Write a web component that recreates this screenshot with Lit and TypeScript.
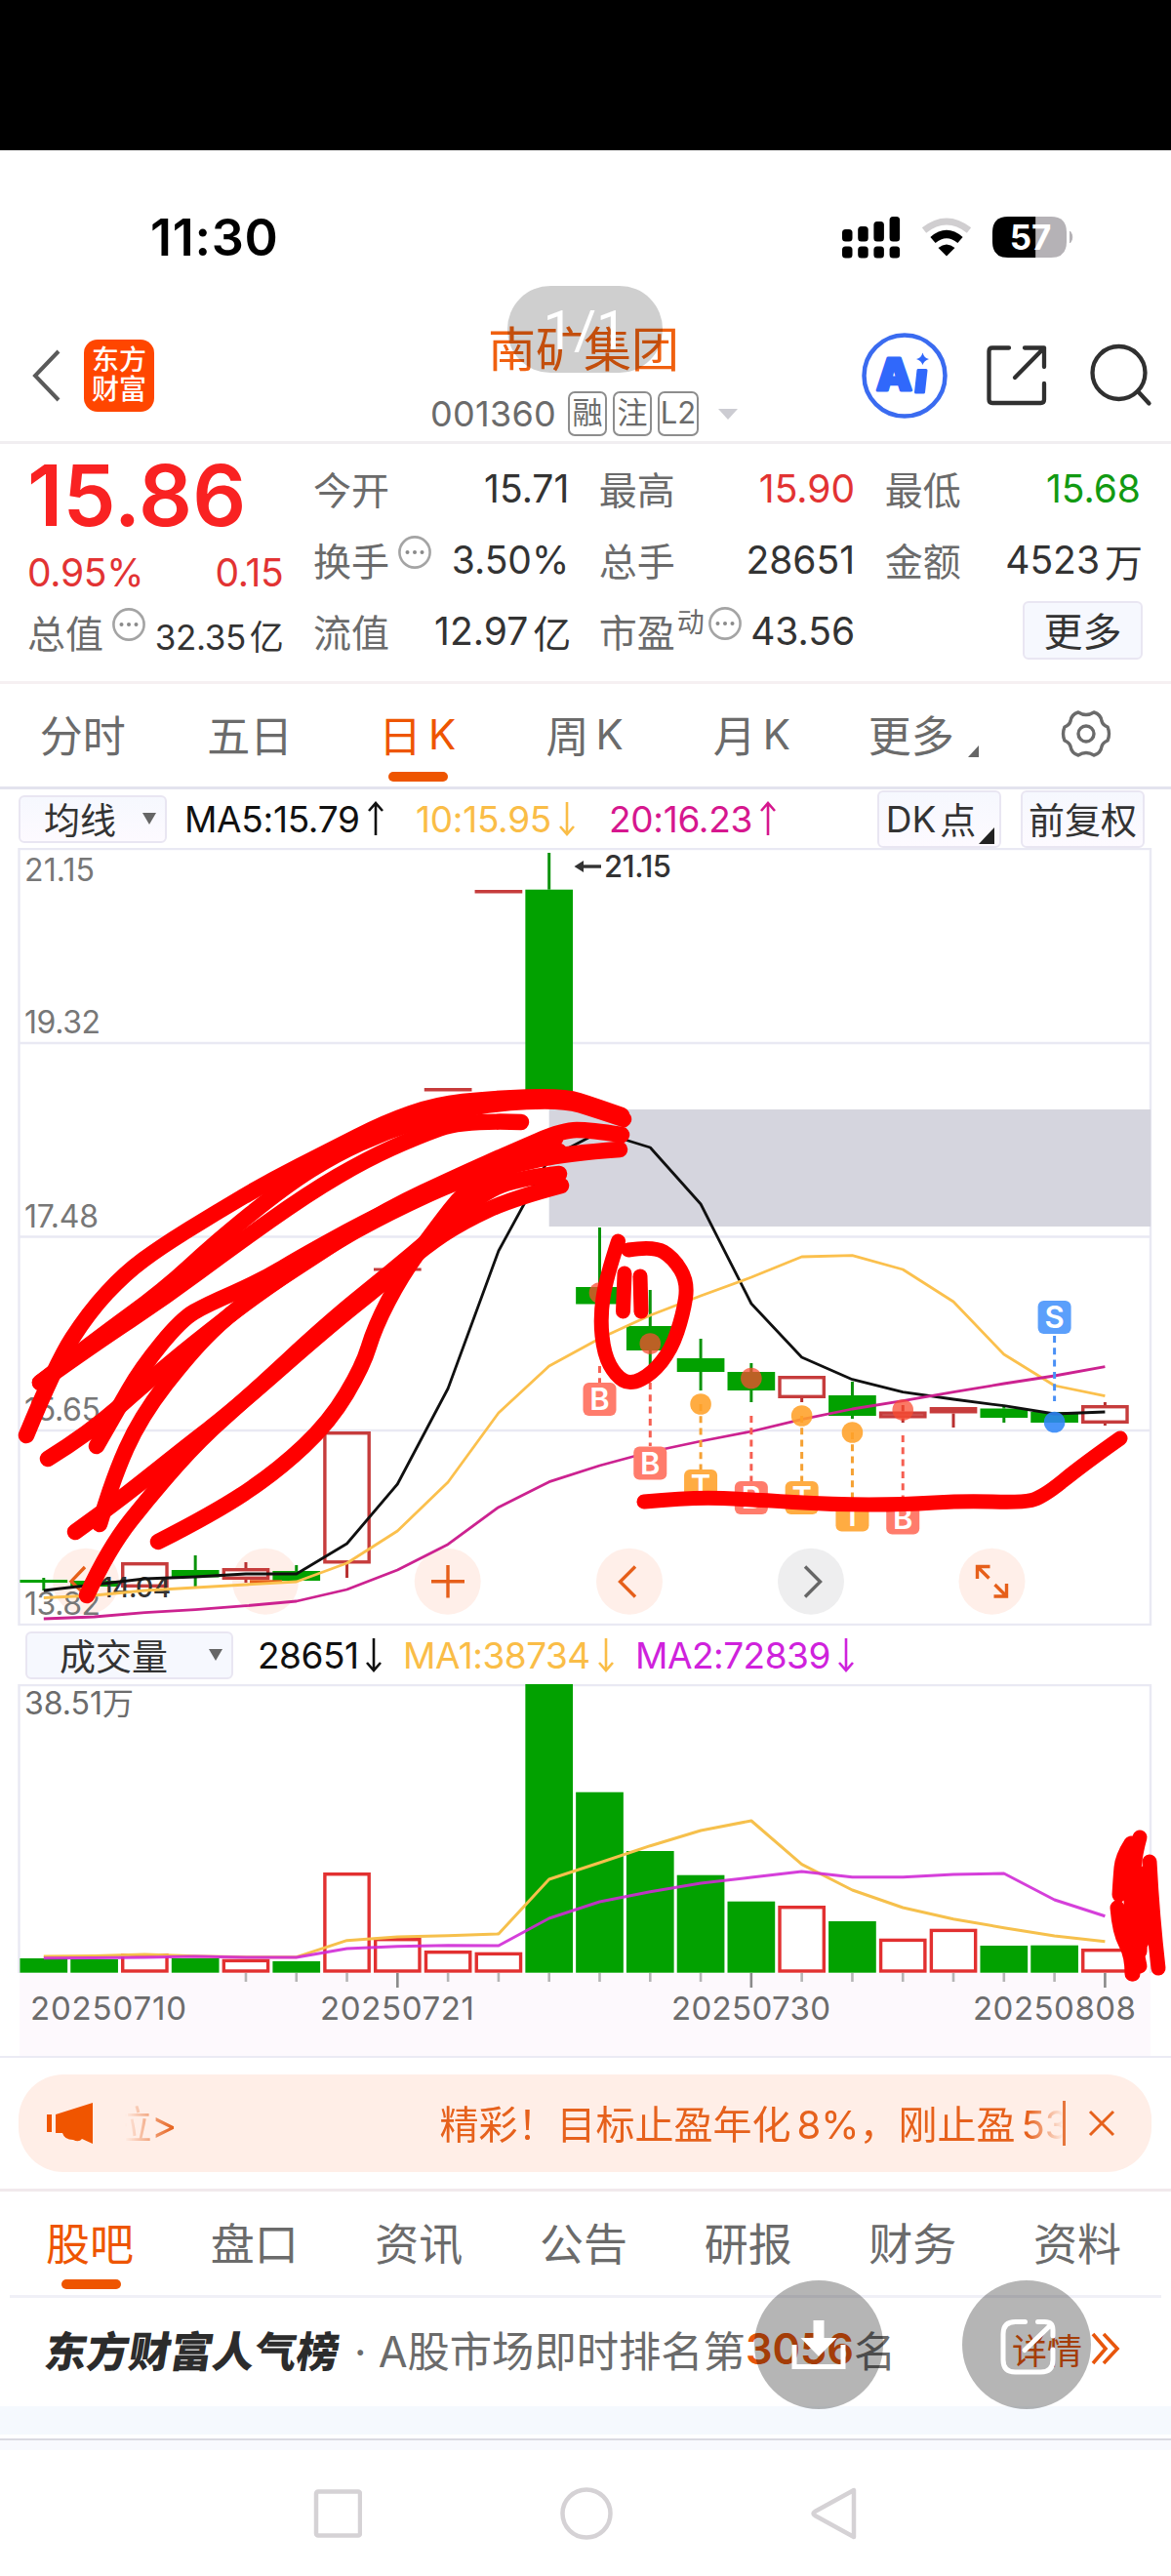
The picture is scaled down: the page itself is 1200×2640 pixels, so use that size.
import { LitElement, html, svg, css } from 'lit';
import { customElement, property } from 'lit/decorators.js';
import { classMap } from 'lit/directives/class-map.js';

const FIRST_X = 44.8;
const STEP = 51.79;
const BAR = 48.7;

const cx = (i: number) => FIRST_X + STEP * i;
const line = (ys: number[]) => ys.map((y, i) => `${cx(i).toFixed(1)},${y}`).join(' ');

type Candle = { top: number; bottom: number; high?: number; low?: number; kind: 'down' | 'up' | 'flat' };

const CANDLES: Candle[] = [
    { kind: 'down', top: 1619, bottom: 1622, high: 1617, low: 1630 },
    { kind: 'down', top: 1620, bottom: 1626 },
    { kind: 'up', top: 1601, bottom: 1627 },
    { kind: 'down', top: 1609, bottom: 1616.5, high: 1594, low: 1626 },
    { kind: 'up', top: 1607, bottom: 1619, high: 1601, low: 1622 },
    { kind: 'down', top: 1610, bottom: 1620, high: 1604 },
    { kind: 'up', top: 1467, bottom: 1602.5, low: 1617 },
    { kind: 'flat', top: 1299.5, bottom: 1302.5 },
    { kind: 'flat', top: 1115, bottom: 1118.5 },
    { kind: 'flat', top: 912, bottom: 915.5 },
    { kind: 'down', top: 911.7, bottom: 1130, high: 874 },
    { kind: 'down', top: 1319, bottom: 1336.5, high: 1258 },
    { kind: 'down', top: 1359, bottom: 1384, high: 1322, low: 1400 },
    { kind: 'down', top: 1392, bottom: 1406, high: 1372, low: 1425 },
    { kind: 'down', top: 1406, bottom: 1425, high: 1397, low: 1437 },
    { kind: 'up', top: 1410, bottom: 1433, low: 1437 },
    { kind: 'down', top: 1430, bottom: 1451, high: 1416, low: 1454 },
    { kind: 'up', top: 1446.5, bottom: 1453.5, high: 1440, low: 1458 },
    { kind: 'flat', top: 1442, bottom: 1448.5, low: 1463 },
    { kind: 'down', top: 1443.5, bottom: 1453, high: 1440, low: 1458 },
    { kind: 'down', top: 1447, bottom: 1458 },
    { kind: 'up', top: 1440, bottom: 1459, high: 1437, low: 1461 }
];

const MA5 = [1630, 1624, 1618, 1616, 1613, 1613, 1582, 1521, 1423, 1282, 1187, 1160, 1176, 1234, 1336, 1391, 1413.7, 1426.7, 1434, 1440.7, 1449, 1447];
const MA10 = [1637.5, 1635, 1630, 1627, 1624, 1621, 1602, 1569, 1519, 1448, 1400, 1371.7, 1348, 1328, 1309, 1288, 1286.7, 1301, 1334, 1388, 1420, 1430.7];
const MA20 = [1659, 1657, 1652.7, 1649.7, 1645.7, 1641, 1629, 1609, 1582.7, 1544.7, 1518.7, 1502, 1488, 1477, 1467, 1454.7, 1444, 1435.7, 1426.7, 1418, 1410, 1400.7];

// [top, rising]
const VOLUMES: [number, boolean][] = [
    [2007, false], [2008, false], [2002, true], [2007, false], [2007.7, true], [2010, false],
    [1919, true], [1986, true], [1999, true], [2000.7, true], [1726, false], [1836.7, false],
    [1897, false], [1921.7, false], [1948.7, false], [1953, true], [1969, false], [1986.7, true],
    [1976.7, true], [1994, false], [1993.7, false], [1997, true]
];
const VOL_MA1 = [2005, 2004.5, 2003, 2004.7, 2005.7, 2005.7, 1988.7, 1985, 1983.7, 1982, 1926, 1909, 1891.7, 1876, 1866, 1910.7, 1937, 1955, 1966.7, 1975.7, 1984, 1989.7];
const VOL_MA2 = [2006.7, 2006.5, 2006, 2005, 2006, 2006, 1997, 1994.7, 1993.7, 1994, 1966, 1949, 1938.7, 1930, 1924, 1918, 1923.7, 1923.7, 1921, 1920, 1947, 1963.7];

type Mark = { i: number; letter: 'B' | 'T' | 'S'; y: number; from: number; to: number; dot: number };

const MARKS: Mark[] = [
    { i: 11, letter: 'B', y: 1434, from: 1400, to: 1417, dot: 1325 },
    { i: 12, letter: 'B', y: 1499.5, from: 1417, to: 1482, dot: 1377 },
    { i: 13, letter: 'T', y: 1523, from: 1439, to: 1506, dot: 1439 },
    { i: 14, letter: 'B', y: 1535, from: 1451, to: 1518, dot: 1412.5 },
    { i: 15, letter: 'T', y: 1535, from: 1451, to: 1518, dot: 1451 },
    { i: 16, letter: 'T', y: 1552.5, from: 1468, to: 1535, dot: 1468 },
    { i: 17, letter: 'B', y: 1555.5, from: 1471, to: 1539, dot: 1445 },
    { i: 20, letter: 'S', y: 1350, from: 1369, to: 1436, dot: 1457.5 }
];

const arrow = (up: boolean) => html`
    <svg class="arrow" width="18" height="36" viewBox="0 0 18 36">
        <path d=${up ? 'M9 35V2M2 10L9 2L16 10' : 'M9 1V34M2 26L9 34L16 26'} />
    </svg>
`;

const info = html`
    <svg class="info" width="36" height="36" viewBox="0 0 36 36">
        <circle cx="18" cy="18" r="15.6" fill="none" stroke="#a4a4a4" stroke-width="2.6" />
        <g fill="#8a8a8a"><circle cx="10.5" cy="18" r="2" /><circle cx="18" cy="18" r="2" /><circle cx="25.5" cy="18" r="2" /></g>
    </svg>
`;

@customElement('k-chart')
export class KChart extends LitElement {
    static styles = css`
        :host { display: block; height: 797px; }
        svg { display: block; }
        text { font-family: Inter, "Noto Sans CJK SC", sans-serif; }
        .grid { fill: none; stroke: #e9e9f3; stroke-width: 2.4; }
        .scale { font-size: 32px; fill: #777; }
        .down { fill: #02a100; }
        .up { fill: #fff; stroke: #c63c3c; stroke-width: 3.4; }
        .flat { fill: #c63c3c; }
        .wick-down { stroke: #0a930a; stroke-width: 3; }
        .wick-up, .wick-flat { stroke: #b83030; stroke-width: 3; }
        .ma { fill: none; stroke-width: 2.8; stroke-linejoin: round; }
        .tag { font-size: 31px; font-weight: 600; fill: #fff; text-anchor: middle; }
        .B { fill: #ff7c6c; }
        .T { fill: #ffac42; }
        .S { fill: #5b9ffb; }
        .dot-B { fill: rgba(250, 76, 50, 0.75); }
        .dot-T { fill: rgba(255, 160, 40, 0.88); }
        .dot-S { fill: rgba(48, 134, 248, 0.88); }
        .dash-B { stroke: #f65f52; }
        .dash-T { stroke: #f5a133; }
        .dash-S { stroke: #4a90f5; }
        .tool { fill: #ffe4da; fill-opacity: 0.6; }
        .tool.off { fill: #e2e2e4; }
        .tool-icon { fill: none; stroke: #e65f1a; stroke-width: 3.4; }
        .peak { font-size: 31px; font-weight: 500; fill: #333; }
    `;

    candle(c: Candle, i: number) {
        const x = cx(i);
        const inset = c.kind === 'up' ? 1.7 : 0;
        return svg`
            ${c.high ? svg`<line class="wick-${c.kind}" x1=${x} x2=${x} y1=${c.high} y2=${c.top} />` : ''}
            ${c.low ? svg`<line class="wick-${c.kind}" x1=${x} x2=${x} y1=${c.bottom} y2=${c.low} />` : ''}
            <rect class=${c.kind} x=${x - BAR / 2 + inset} y=${c.top + inset}
                width=${BAR - inset * 2} height=${c.bottom - c.top - inset * 2} />
        `;
    }

    mark(m: Mark) {
        const x = cx(m.i);
        return svg`
            <line class="dash-${m.letter}" x1=${x} x2=${x} y1=${m.from} y2=${m.to} stroke-width="3" stroke-dasharray="7 5.3" />
            <circle class="dot-${m.letter}" cx=${x} cy=${m.dot} r="10.8" />
            <rect class=${m.letter} x=${x - 17} y=${m.y - 17} width="34" height="34" rx="6" />
            <text class="tag" x=${x} y=${m.y + 11.3}>${m.letter}</text>
        `;
    }

    render() {
        const tools = [88, 272, 458.7, 645, 831, 1016.5];
        return html`
            <svg width="1200" height="797" viewBox="0 869 1200 797">
                <rect class="grid" x="19.5" y="870" width="1159.5" height="795" />
                <path class="grid" d="M19.5 1069H1179M19.5 1267.5H1179M19.5 1466H1179" />
                <rect x="562.7" y="1137" width="616.5" height="120" fill="#d5d5de" />
                ${tools.map((x, i) => svg`<circle class="tool ${i === 4 ? 'off' : ''}" cx=${x} cy="1620.7" r="34" />`)}
                <text class="scale" x="25" y="903" textLength="72">21.15</text>
                <text class="scale" x="25" y="1059" textLength="78">19.32</text>
                <text class="scale" x="25" y="1257.5" textLength="76">17.48</text>
                <text class="scale" x="25" y="1456" textLength="78">15.65</text>
                <text class="scale" x="25" y="1655" textLength="78">13.82</text>
                ${CANDLES.map((c, i) => this.candle(c, i))}
                <g class="tool-icon">
                    <path d="M87 1606L73 1620.7L87 1634" />
                    <path d="M256 1621H289" />
                    <path d="M442 1620.7H476M459 1604V1637.500" />
                    <path d="M651 1605.500L635.500 1621L651 1636.500" />
                    <path d="M825 1605.500L840.500 1621L825 1636.500" stroke="#666" />
                    <path d="M1001.500 1618V1605.500H1014.500M1002 1606L1013.500 1617.500M1031.500 1623V1636H1018.500M1031 1635.500L1019.500 1624" />
                </g>
                <text x="104" y="1636.500" font-size="28" font-weight="500" fill="#333" textLength="71">14.04</text>
                <polyline class="ma" stroke="#101010" points=${line(MA5)} />
                <polyline class="ma" stroke="#fbc04d" points=${line(MA10)} />
                <polyline class="ma" stroke="#cc2290" points=${line(MA20)} />
                <path d="M598 888H616" stroke="#333" stroke-width="3.4" />
                <path d="M588.500 888L598 882V894Z" fill="#333" />
                <text class="peak" x="619" y="899" textLength="69">21.15</text>
                ${MARKS.map((m) => this.mark(m))}
            </svg>
        `;
    }
}

@customElement('volume-chart')
export class VolumeChart extends LitElement {
    static styles = css`
        :host { display: block; height: 381px; }
        svg { display: block; }
        text { font-family: Inter, "Noto Sans CJK SC", sans-serif; fill: #6c6c6c; }
        .frame { fill: none; stroke: #e9e9f3; stroke-width: 2.4; }
        .down { fill: #02a100; }
        .up { fill: #fff; stroke: #e23030; stroke-width: 3.4; }
        .ma { fill: none; stroke-width: 3; stroke-linejoin: round; }
        .date { font-size: 33px; }
    `;

    render() {
        return html`
            <svg width="1200" height="381" viewBox="0 1726 1200 381">
                <rect x="20" y="2022" width="1159" height="85" fill="#fdf9fd" />
                <path class="frame" d="M19.500 2022V1727H1179V2022" />
                <text x="25" y="1757" font-size="32" textLength="112">38.51万</text>
                ${VOLUMES.map(([top, rising], i) => {
                    const inset = rising ? 1.7 : 0;
                    return svg`<rect class=${rising ? 'up' : 'down'} x=${cx(i) - BAR / 2 + inset} y=${top + inset}
                        width=${BAR - inset * 2} height=${2021.7 - top - inset * 2} />`;
                })}
                ${VOLUMES.map((_, i) => {
                    if (i < 4) return '';
                    const major = i % 7 === 0;
                    return svg`<line x1=${cx(i)} x2=${cx(i)} y1="2022" y2=${major ? 2037 : 2031}
                        stroke=${major ? '#8a8a8a' : '#b5b5b5'} stroke-width="2.6" />`;
                })}
                <polyline class="ma" stroke="#f6c04c" points=${line(VOL_MA1)} />
                <polyline class="ma" stroke="#d02ad6" stroke-opacity="0.9" points=${line(VOL_MA2)} />
                <text class="date" x="31" y="2070" textLength="160">20250710</text>
                <text class="date" x="328" y="2070" textLength="158">20250721</text>
                <text class="date" x="688" y="2070" textLength="163">20250730</text>
                <text class="date" x="997" y="2070" textLength="167">20250808</text>
            </svg>
        `;
    }
}

@customElement('quote-cell')
export class QuoteCell extends LitElement {
    @property() label = '';
    @property() value = '';
    @property() unit = '';
    @property() tone = '';
    @property() sup = '';
    @property({ type: Boolean }) tip = false;

    static styles = css`
        :host { display: flex; align-items: center; height: 73px; font-size: 39px; color: #333; white-space: nowrap; }
        .label { color: #6b6b6b; padding-bottom: 1px; }
        .sup { font-size: 28px; color: #6b6b6b; margin: 0 0 22px 2px; }
        .info { display: block; margin: 0 0 15px 8px; }
        .sup + .info { margin-left: 3px; }
        .value { margin-left: auto; }
        .unit { margin-left: 5px; margin-right: -2px; }
        .red { color: #e23333; }
        .green { color: #129a12; }
    `;

    render() {
        return html`
            <span class="label">${this.label}</span>
            ${this.sup ? html`<span class="sup">${this.sup}</span>` : ''}
            ${this.tip ? info : ''}
            <span class="value ${this.tone}">${this.value}</span>
            ${this.unit ? html`<span class="unit">${this.unit}</span>` : ''}
        `;
    }
}

// Freehand notes drawn on top of the chart.
@customElement('ink-layer')
export class InkLayer extends LitElement {
    static styles = css`
        :host { position: absolute; left: 0; top: 0; pointer-events: none; }
        svg { display: block; }
        g { fill: none; stroke: #f00; stroke-linecap: round; stroke-linejoin: round; }
    `;

    // Smooths a list of points with quadratic segments through the midpoints.
    stroke(points: number[][]) {
        let d = `M${points[0]}`;
        for (let i = 1; i < points.length - 1; i++) {
            const [x, y] = points[i];
            const [nx, ny] = points[i + 1];
            d += i === points.length - 2 ? `Q${x} ${y} ${nx} ${ny}` : `Q${x} ${y} ${(x + nx) / 2} ${(y + ny) / 2}`;
        }
        if (points.length === 2) d += `L${points[1]}`;
        return svg`<path d=${d} />`;
    }

    render() {
        const shade = [
            [[27, 1471], [57, 1398], [91, 1345], [128, 1305], [166, 1277], [221, 1243], [277, 1210], [336, 1180], [395, 1150], [447, 1132], [502, 1126], [577, 1123], [609, 1133], [637, 1143]],
            [[41, 1417], [97, 1374], [168, 1322], [221, 1273], [293, 1215], [344, 1183], [395, 1160], [447, 1143], [502, 1131], [577, 1127], [612, 1138], [639, 1147]],
            [[41, 1417], [97, 1377], [170, 1329], [237, 1279], [316, 1223], [376, 1188], [427, 1165], [474, 1148], [534, 1150]],
            [[49, 1495], [91, 1469], [150, 1417], [198, 1377], [269, 1322], [334, 1280], [395, 1240], [474, 1203], [526, 1180], [577, 1158], [605, 1158], [637, 1163]],
            [[99, 1482], [119, 1447], [145, 1402], [186, 1352], [212, 1337], [265, 1314], [314, 1285], [380, 1249], [474, 1204], [569, 1167]],
            [[102, 1562], [115, 1517], [144, 1452], [196, 1385], [237, 1345], [277, 1317], [336, 1277], [400, 1242], [474, 1208], [526, 1194], [580, 1182], [635, 1178]],
            [[77, 1570], [119, 1540], [190, 1483], [237, 1447], [336, 1360], [395, 1313], [435, 1278], [474, 1252], [526, 1228], [575, 1215]],
            [[89, 1635], [111, 1587], [158, 1528], [205, 1475], [256, 1430], [336, 1356], [395, 1308], [450, 1262], [490, 1226], [526, 1208], [573, 1203]],
            [[162, 1580], [221, 1550], [285, 1507], [338, 1457], [372, 1400], [384, 1360], [411, 1308], [447, 1258], [476, 1221], [514, 1196], [573, 1180]]
        ];
        const notes = [
            [[633.5, 1272], [621, 1310], [615, 1350], [619, 1388], [631, 1410], [646, 1419], [668, 1408], [688, 1383], [700, 1347], [705, 1314], [690, 1289], [670, 1277], [644, 1281]],
            [[640, 1305], [638.5, 1344]],
            [[656, 1308], [657, 1344]],
            [[660, 1539], [710, 1534], [772, 1537], [854, 1542], [927, 1542], [988, 1538], [1046, 1540], [1068, 1535], [1111, 1500], [1148, 1474]],
            [[1168, 1883], [1159, 1915], [1168, 1960], [1163, 1995], [1168, 2015]],
            [[1159, 1889], [1150, 1903], [1148, 1925], [1147, 1942]],
            [[1145, 1955], [1147, 1980], [1160, 2004], [1160, 2023]],
            [[1160, 1895], [1158, 1930], [1160, 1965], [1161, 2023]],
            [[1166, 1920], [1170, 1960], [1168, 2000]],
            [[1178, 1908], [1181, 1965], [1187, 2017]],
            [[1172, 1920], [1173, 1960], [1170, 1990]]
        ];
        return html`
            <svg width="1200" height="2107" viewBox="0 0 1200 2107">
                <g stroke-width="16.500">${shade.map((s) => this.stroke(s))}</g>
                <g stroke-width="15">${notes.map((s) => this.stroke(s))}</g>
            </svg>
        `;
    }
}

@customElement('app-root')
export class AppRoot extends LitElement {
    static styles = css`
        :host {
            display: block;
            position: relative;
            width: 1200px;
            height: 2640px;
            overflow: hidden;
            background: #fff;
            color: #333;
            font-family: Inter, "Noto Sans CJK SC", sans-serif;
            white-space: nowrap;
        }
        * { box-sizing: border-box; }
        svg { display: block; flex: none; }

        .cutout { height: 154px; background: #000; }
        .status { height: 178px; display: flex; align-items: center; padding: 0 99px 0 154px; color: #000; }
        .time { font-size: 52px; font-weight: 600; margin-right: auto; letter-spacing: 0.7px; }
        .status svg + svg { margin-left: 20px; }

        header { height: 123px; display: grid; grid-template-columns: 1fr auto 1fr; border-bottom: 3px solid #f1eef1; }
        .side { display: flex; align-items: center; height: 106px; }
        .left { padding-left: 31px; gap: 23px; }
        .right { justify-content: flex-end; padding-right: 18px; }
        .share { margin-left: 38px; }
        .search { margin-left: 41px; }
        .logo {
            width: 72px; height: 74px; border-radius: 14px; background: #ff4600; color: #fff;
            font-size: 28px; font-weight: 500; line-height: 30px; padding-top: 6px; text-align: center;
        }
        .name { height: 54px; line-height: 54px; font-size: 49px; color: #f0600f; text-align: center; padding-right: 4px; }
        .code { display: flex; align-items: center; height: 46px; margin-top: 15px; font-size: 36px; color: #6b6b6b; padding-right: 3px; }
        .code .num { margin-right: 12px; letter-spacing: 0.3px; }
        .badge {
            width: 40px; height: 46px; margin-right: 6px; border: 2.500px solid #8d8d8d; border-radius: 7px;
            font-size: 31px; line-height: 40px; text-align: center;
        }
        .badge.wide { width: 42px; margin-right: 20px; }
        .caret { width: 0; height: 0; border: 10px solid transparent; border-bottom: 0; border-top: 11px solid #ccccd2; }

        .quotes { height: 246px; display: grid; grid-template-columns: repeat(4, 1fr); column-gap: 30.500px; padding: 0 31px 0 28px; border-bottom: 3px solid #f6f0f2; }
        .col { padding-top: 9px; }
        .main { padding-top: 0; color: #e23333; font-size: 39px; }
        .price { height: 105px; line-height: 106px; font-size: 86px; font-weight: 600; color: #f92222; letter-spacing: 0.2px; }
        .change { display: flex; justify-content: space-between; align-items: center; height: 52px; letter-spacing: -0.3px; }
        .cap { height: 70px; display: flex; align-items: center; color: #6b6b6b; }
        .cap .info { margin: 0 auto 14px 8px; }
        .cap .value { font-size: 35px; letter-spacing: -0.4px; color: #333; padding-top: 6px; }
        .cap .unit { margin-left: 4px; }
        .box { background: #f6f8fe; border: 2px solid #e9e6f2; border-radius: 6px; color: #333; display: flex; align-items: center; justify-content: center; }
        .more { width: 123px; height: 60px; margin: 6px -2px 0 auto; font-size: 40px; padding-bottom: 2px; }

        .ktabs { height: 108px; display: grid; grid-template-columns: repeat(7, 1fr); border-bottom: 3px solid #e3e3ee; font-size: 44px; color: #6b6b6b; }
        .ktab { position: relative; display: flex; align-items: center; justify-content: center; padding: 0 2px 3px 0; }
        .ktab .latin { margin-left: 7px; font-size: 42px; }
        .active { color: #ee5500; }
        .ktab.active::after, .tab.active::after {
            content: ""; position: absolute; bottom: 5px; left: 50%; width: 61px; height: 10px;
            margin-left: -31px; border-radius: 5px; background: #ee5500;
        }
        .corner { width: 0; height: 0; border-left: 11px solid transparent; border-bottom: 12px solid #666; align-self: flex-end; }
        .ktab .corner { margin: 0 -9px 27px 14px; }

        .indicator { height: 60px; display: flex; align-items: center; font-size: 37px; }
        .pick { height: 49px; font-size: 37px; justify-content: flex-end; }
        .pick .tri { width: 0; height: 0; border: 7.500px solid transparent; border-bottom: 0; border-top: 12px solid #666; }
        .reading { display: flex; align-items: center; }
        .reading .arrow { margin-left: 7px; }
        .arrow { fill: none; stroke: currentColor; stroke-width: 2.6; }
        .ma-row { padding: 0 27px 0 19px; }
        .ma-row .pick { width: 152px; padding-right: 9px; margin-right: 18px; }
        .ma-row .tri { margin-left: 27px; }
        .ma-row .reading { letter-spacing: -0.3px; }
        .ma-row .box { background: linear-gradient(#f6f8fe, #fdfaff); }
        .ink { color: #111; width: 237px; }
        .gold { color: #fabd47; width: 198px; }
        .pink { color: #d6178e; }
        .dk { width: 127px; height: 59px; margin-left: auto; }
        .dk .dian { margin-left: 4px; }
        .dk .corner { border-left-width: 16px; border-bottom: 17px solid #222; margin: 0 -2px 2px 3px; }
        .fq { width: 127px; height: 59px; margin-left: 20px; }
        .vol-row { padding-left: 26px; }
        .vol-row .pick { width: 213px; padding-right: 9px; margin-right: 25px; }
        .vol-row .tri { margin-left: 42px; }
        .vol-row .ink { width: 149px; }
        .vol-row .gold { width: 238px; }
        .vol-row .reading { letter-spacing: -0.5px; }
        .violet { color: #cf22dc; }

        .notice { height: 139px; padding: 17px 20px 0 19px; border-top: 2px solid #ebebf4; border-bottom: 3px solid #f1e9ec; }
        .pill { height: 100px; border-radius: 46px; background: #ffeee7; display: flex; align-items: center; padding: 0 37px 0 29px; color: #e6611c; font-size: 40px; }
        .ticker {
            display: flex; width: 966px; margin-left: 32px; overflow: hidden; padding-bottom: 3px;
            mask-image: linear-gradient(90deg, transparent, #000 50px, #000 925px, transparent 962px);
        }
        .ticker .prev { margin-left: -13px; }
        .ticker .next { margin-left: 269px; }
        .ticker .num { margin-left: 6px; }
        .rule { width: 3px; height: 46px; background: #e6763c; margin-right: 23px; }

        .tabs { height: 106px; display: flex; justify-content: space-between; padding: 0 51px 0 47px; font-size: 45px; color: #6b6b6b; }
        .tab { position: relative; height: 100px; line-height: 109px; }
        .tab.active { color: #ee5500; }
        .tab.active::after { bottom: 0; margin-left: -29px; }

        .rank { height: 114px; margin: 0 10px; border-top: 3px solid #f0f0f7; display: flex; align-items: center; padding: 0 42px 8px 37px; font-size: 43.300px; color: #6b6b6b; }
        .rank b { color: #2c2c2c; font-size: 43px; font-weight: 800; transform: skewX(-9deg); margin-right: 15px; }
        .rank .pos { color: #e8560c; font-weight: 600; }
        .rank .detail { color: #e8560c; font-size: 36px; margin-left: auto; margin-right: 9px; }
        .gap { height: 35px; background: linear-gradient(#f5f9fe 29px, #fff 29px); border-bottom: 2px solid #dadae2; }
        .gap2 { height: 10px; background: #f8fafe; }
        nav { height: 130px; display: flex; justify-content: center; gap: 203px; align-items: center; }

        .counter {
            position: absolute; left: 520px; top: 293px; width: 159px; height: 89px; border-radius: 44px;
            background: rgba(0, 0, 0, 0.19); color: #fff; font: 400 56px/92px Roboto, sans-serif; text-align: center;
        }
        .float { position: absolute; top: 2337px; width: 132px; height: 132px; border-radius: 50%; background: rgba(0, 0, 0, 0.29); }
        .save { left: 772.500px; }
        .open { left: 985.500px; }
    `;

    tabs = ['股吧', '盘口', '资讯', '公告', '研报', '财务', '资料'];
    periods = [['分时'], ['五日'], ['日', 'K'], ['周', 'K'], ['月', 'K']];

    renderStatus() {
        const tops = [235, 232, 227, 222];
        return html`
            <div class="cutout"></div>
            <div class="status">
                <span class="time">11:30</span>
                <svg width="62" height="44" viewBox="859 221 62 44">
                    ${tops.map((y, i) => svg`
                        <rect x=${860 + i * 16.2} y=${y} width="10.500" height=${247.5 - y} rx="3.500" />
                        <rect x=${860 + i * 16.2} y="252.500" width="10.500" height="12" rx="3.500" />
                    `)}
                </svg>
                <svg width="52" height="44" viewBox="941 221 52 44" fill="none">
                    <path d="M944 236Q967 218 990 236" stroke="#d0ced0" stroke-width="7" />
                    <path d="M953 246Q967 234 981 246" stroke="#000" stroke-width="8" />
                    <path d="M958.500 254Q967 247 975.500 254L967 262.500Z" fill="#000" />
                </svg>
                <svg width="85" height="44" viewBox="1014 221 85 44">
                    <path d="M1059.500 222H1031Q1015 222 1015 238V248Q1015 264 1031 264H1059.500Z" />
                    <path d="M1059.500 222H1075Q1091 222 1091 238V248Q1091 264 1075 264H1059.500Z" fill="#b5b2b6" />
                    <path d="M1094.500 237Q1099 243 1094.500 249Z" fill="#b5b2b6" stroke="#b5b2b6" />
                    <text x="1054" y="256" font-size="35" font-weight="700" fill="#fff" text-anchor="middle">57</text>
                </svg>
            </div>
        `;
    }

    renderHeader() {
        return html`
            <header>
                <div class="side left">
                    <svg width="32" height="54" viewBox="0 0 32 54"><path d="M29 2L5 27L29 52" fill="none" stroke="#5a5a5a" stroke-width="4" /></svg>
                    <div class="logo">东方<br />财富</div>
                </div>
                <div>
                    <div class="name">南矿集团</div>
                    <div class="code">
                        <span class="num">001360</span>
                        <span class="badge">融</span>
                        <span class="badge">注</span>
                        <span class="badge wide">L2</span>
                        <i class="caret"></i>
                    </div>
                </div>
                <div class="side right">
                    <svg width="90" height="90" viewBox="882 340 90 90">
                        <circle cx="927" cy="385" r="41.500" fill="none" stroke="#3a6bf0" stroke-width="4.500" />
                        <g fill="#3068fb" stroke="#3068fb" font-size="46" font-weight="900">
                            <text x="898" y="400" stroke-width="3" stroke-linejoin="round" textLength="35">A</text>
                            <path stroke="none" d="M945.500 361.500Q947 367 952 368Q947 369.500 945.500 374Q944 369.500 939 368Q944 367 945.500 361.500Z" />
                            <path stroke-width="3" stroke-linejoin="round" d="M941 379.500H949L946.500 402H938.500Z" />
                        </g>
                    </svg>
                    <svg class="share" width="65" height="64" viewBox="1011 353 65 64" fill="none" stroke="#303030" stroke-width="4.300" stroke-linecap="round" stroke-linejoin="round">
                        <path d="M1035 356.500H1018Q1014.500 356.500 1014.500 360V409.500Q1014.500 413 1018 413H1067.500Q1071 413 1071 409.500V393" />
                        <path d="M1051 356.500H1071V376M1071 356.500L1041 387" />
                    </svg>
                    <svg class="search" width="66" height="66" viewBox="1116 352 66 66" fill="none" stroke="#303030" stroke-width="4.300" stroke-linecap="round">
                        <circle cx="1146.500" cy="382" r="27" /><path d="M1166 401L1177.500 413.500" />
                    </svg>
                </div>
            </header>
        `;
    }

    renderQuotes() {
        return html`
            <section class="quotes">
                <div class="main">
                    <div class="price">15.86</div>
                    <div class="change"><span>0.95%</span><span>0.15</span></div>
                    <div class="cap"><span>总值</span>${info}<span class="value">32.35<span class="unit">亿</span></span></div>
                </div>
                <div class="col">
                    <quote-cell label="今开" value="15.71"></quote-cell>
                    <quote-cell label="换手" value="3.50%" tip></quote-cell>
                    <quote-cell label="流值" value="12.97" unit="亿"></quote-cell>
                </div>
                <div class="col">
                    <quote-cell label="最高" value="15.90" tone="red"></quote-cell>
                    <quote-cell label="总手" value="28651"></quote-cell>
                    <quote-cell label="市盈" sup="动" value="43.56" tip></quote-cell>
                </div>
                <div class="col">
                    <quote-cell label="最低" value="15.68" tone="green"></quote-cell>
                    <quote-cell label="金额" value="4523" unit="万"></quote-cell>
                    <div class="box more">更多</div>
                </div>
            </section>
        `;
    }

    renderPeriods() {
        return html`
            <div class="ktabs">
                ${this.periods.map(([name, latin], i) => html`
                    <div class=${classMap({ ktab: true, active: i === 2 })}>
                        ${name}${latin ? html`<span class="latin">${latin}</span>` : ''}
                    </div>
                `)}
                <div class="ktab">更多<i class="corner"></i></div>
                <div class="ktab">
                    <svg width="52" height="52" viewBox="-26 -26 52 52" fill="none" stroke="#6b6b6b" stroke-width="3.400" stroke-linejoin="round">
                        <path d="M-8 -22Q0 -17 8 -22Q15 -20 16 -13Q17 -9 22 -7Q25 0 22 7Q17 9 16 13Q15 20 8 22Q0 17 -8 22Q-15 20 -16 13Q-17 9 -22 7Q-25 0 -22 -7Q-17 -9 -16 -13Q-15 -20 -8 -22Z" />
                        <circle r="8" />
                    </svg>
                </div>
            </div>
            <div class="indicator ma-row">
                <div class="box pick">均线<i class="tri"></i></div>
                <span class="reading ink">MA5:15.79${arrow(true)}</span>
                <span class="reading gold">10:15.95${arrow(false)}</span>
                <span class="reading pink">20:16.23${arrow(true)}</span>
                <div class="box dk">DK<span class="dian">点</span><i class="corner"></i></div>
                <div class="box fq">前复权</div>
            </div>
        `;
    }

    renderBottom() {
        return html`
            <div class="notice">
                <div class="pill">
                    <svg width="48" height="42" viewBox="0 0 48 42" fill="#f05500">
                        <path d="M0 12H5V30H0ZM9 12L47 0V42L36 37Q33 41 27 38Q18 38 16 31H9Z" />
                    </svg>
                    <div class="ticker">
                        <span class="prev">拉&gt;</span>
                        <span class="next">精彩！目标止盈年化<span class="num">8%</span>，刚止盈<span class="num">53</span></span>
                    </div>
                    <i class="rule"></i>
                    <svg width="28" height="28" viewBox="0 0 28 28" stroke="#e6611c" stroke-width="3"><path d="M2 2L26 26M26 2L2 26" /></svg>
                </div>
            </div>
            <div class="tabs">
                ${this.tabs.map((t, i) => html`<span class=${classMap({ tab: true, active: i === 0 })}>${t}</span>`)}
            </div>
            <div class="rank">
                <b>东方财富人气榜</b>
                <span>· A股市场即时排名第</span><span class="pos">3056</span><span>名</span>
                <span class="detail">详情</span>
                <svg width="30" height="34" viewBox="0 0 30 34" fill="none" stroke="#e8560c" stroke-width="3.600"><path d="M2 2L15 17L2 32M13 2L27 17L13 32" /></svg>
            </div>
            <div class="gap"></div>
            <div class="gap2"></div>
            <nav>
                <svg width="50" height="54" viewBox="0 0 50 54" fill="none" stroke="#d5d2d5" stroke-width="4.500"><rect x="3" y="4.500" width="45" height="45" rx="2" /></svg>
                <svg width="54" height="54" viewBox="0 0 54 54" fill="none" stroke="#d5d2d5" stroke-width="4.500"><circle cx="27" cy="27" r="24.500" /></svg>
                <svg width="48" height="54" viewBox="0 0 48 54" fill="none" stroke="#d5d2d5" stroke-width="4.500" stroke-linejoin="round"><path d="M44 3V51L4 29Q1 27 4 25Z" /></svg>
            </nav>
        `;
    }

    render() {
        return html`
            ${this.renderStatus()}
            ${this.renderHeader()}
            ${this.renderQuotes()}
            ${this.renderPeriods()}
            <k-chart></k-chart>
            <div class="indicator vol-row">
                <div class="box pick">成交量<i class="tri"></i></div>
                <span class="reading ink">28651${arrow(false)}</span>
                <span class="reading gold">MA1:38734${arrow(false)}</span>
                <span class="reading violet">MA2:72839${arrow(false)}</span>
            </div>
            <volume-chart></volume-chart>
            ${this.renderBottom()}
            <ink-layer></ink-layer>
            <div class="counter">1/1</div>
            <div class="float save">
                <svg width="132" height="132" viewBox="772.500 2337 132 132" fill="#fff">
                    <path d="M833 2378H844V2396H857L838.500 2415L820 2396H833Z" />
                    <path d="M813.500 2403V2425.500H863.500V2403" fill="none" stroke="#fff" stroke-width="5" />
                </svg>
            </div>
            <div class="float open">
                <svg width="132" height="132" viewBox="985.500 2337 132 132" fill="none" stroke="#fff" stroke-width="5" stroke-linecap="round">
                    <path d="M1050 2379.500H1040Q1027.500 2379.500 1027.500 2392V2418.500Q1027.500 2431 1040 2431H1066Q1078.500 2431 1078.500 2418.500V2408" />
                    <path d="M1063 2379.500H1070Q1078.500 2379.500 1078.500 2388V2394M1077 2382L1049.500 2408.500" />
                </svg>
            </div>
        `;
    }
}
